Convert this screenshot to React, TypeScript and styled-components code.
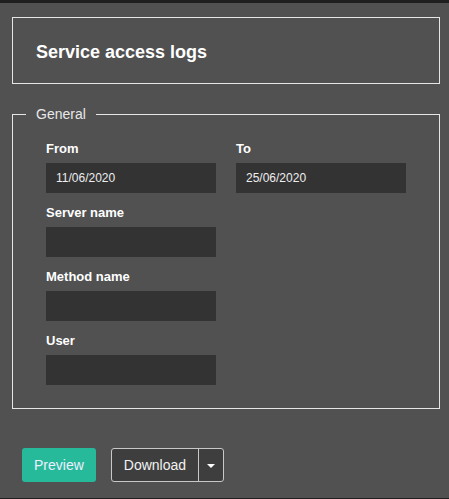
import React from 'react'
import styled, { createGlobalStyle } from 'styled-components'

const Global = createGlobalStyle`
  html, body {
    margin: 0;
    padding: 0;
    background: #515151;
    font-family: "Liberation Sans", Arial, sans-serif;
  }
`

const Page = styled.div`
  height: 499px;
  box-sizing: border-box;
  border-top: 3px solid #1f1f1f;
  border-bottom: 1px solid #1f1f1f;
  padding: 14px 9px 0 12px;
  color: #fff;
`

const TitleBox = styled.div`
  height: 67px;
  box-sizing: border-box;
  border: 1px solid #e6e6e6;
  display: flex;
  align-items: center;
  padding: 4px 23px 0;
`

const Title = styled.h1`
  margin: 0;
  font-size: 18px;
  font-weight: bold;
  color: #fff;
`

const Fieldset = styled.fieldset`
  margin: 22px 0 0;
  border: 1px solid #e6e6e6;
  padding: 19px 33px 23px;
`

const Legend = styled.legend`
  margin-left: -20px;
  padding: 0 10px;
  font-size: 14px;
  color: #e8e8e8;
`

const Grid = styled.div`
  display: grid;
  grid-template-columns: 170px 170px;
  column-gap: 20px;
  row-gap: 12px;
`

const Field = styled.div`
  display: flex;
  flex-direction: column;
`

const Label = styled.label`
  font-size: 13px;
  font-weight: bold;
  line-height: 16px;
  margin-bottom: 6px;
  color: #fff;
`

const Input = styled.input`
  height: 30px;
  width: 170px;
  box-sizing: border-box;
  border: none;
  background: #333333;
  color: #eee;
  font-family: "Liberation Sans", Arial, sans-serif;
  font-size: 12px;
  padding: 0 10px;
  outline: none;
`

const Actions = styled.div`
  display: flex;
  gap: 15px;
  margin-top: 39px;
  padding-left: 10px;
`

const Primary = styled.button`
  height: 34px;
  padding: 0 12px;
  border: none;
  border-radius: 3px;
  background: #26b99a;
  color: #eef;
  font-family: "Liberation Sans", Arial, sans-serif;
  font-size: 14px;
`

const Group = styled.div`
  display: flex;
  height: 34px;
  box-sizing: border-box;
  border: 1px solid #c8c8c8;
  border-radius: 3px;
  background: #3e3e3e;
  overflow: hidden;
`

const GroupButton = styled.button<{ $caret?: boolean }>`
  border: none;
  background: transparent;
  color: #f2f2f2;
  font-family: "Liberation Sans", Arial, sans-serif;
  font-size: 14px;
  padding: ${(p) => (p.$caret ? '0' : '0 12px')};
  width: ${(p) => (p.$caret ? '25px' : 'auto')};
  border-left: ${(p) => (p.$caret ? '1px solid #c8c8c8' : 'none')};
  display: flex;
  align-items: center;
  justify-content: center;
`

const Caret = styled.span`
  width: 0;
  height: 0;
  margin-top: 2px;
  border-left: 4px solid transparent;
  border-right: 4px solid transparent;
  border-top: 4px solid #fff;
`

export default function App() {
  return (
    <Page>
      <Global />
      <TitleBox>
        <Title>Service access logs</Title>
      </TitleBox>
      <Fieldset>
        <Legend>General</Legend>
        <Grid>
          <Field>
            <Label>From</Label>
            <Input defaultValue="11/06/2020" />
          </Field>
          <Field>
            <Label>To</Label>
            <Input defaultValue="25/06/2020" />
          </Field>
          <Field>
            <Label>Server name</Label>
            <Input />
          </Field>
          <div />
          <Field>
            <Label>Method name</Label>
            <Input />
          </Field>
          <div />
          <Field>
            <Label>User</Label>
            <Input />
          </Field>
        </Grid>
      </Fieldset>
      <Actions>
        <Primary>Preview</Primary>
        <Group>
          <GroupButton>Download</GroupButton>
          <GroupButton $caret>
            <Caret />
          </GroupButton>
        </Group>
      </Actions>
    </Page>
  )
}
